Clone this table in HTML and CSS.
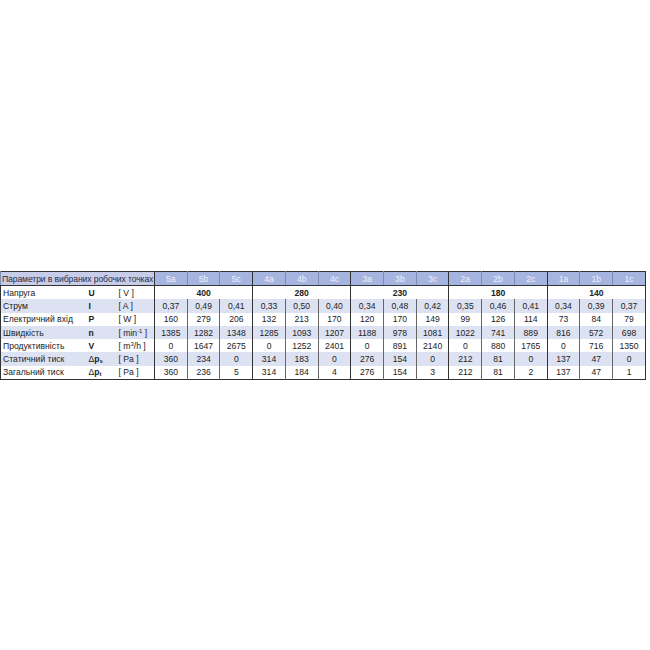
FILE: index.html
```html
<!DOCTYPE html>
<html>
<head>
<meta charset="utf-8">
<link rel="stylesheet" href="styles.css">
</head>
<body>
<div class="page">
<table class="params">
<colgroup>
<col class="c-name"><col class="c-sym"><col class="c-unit">
<col span="15" class="c-data">
</colgroup>
<thead>
<tr>
<th colspan="3" class="title">Параметри в вибраних робочих точках</th>
<th class="gs">5a</th><th>5b</th><th>5c</th>
<th class="gs">4a</th><th>4b</th><th>4c</th>
<th class="gs">3a</th><th>3b</th><th>3c</th>
<th class="gs">2a</th><th>2b</th><th>2c</th>
<th class="gs">1a</th><th>1b</th><th>1c</th>
</tr>
</thead>
<tbody>
<tr>
<td class="name">Напруга</td><td class="sym">U</td><td class="unit">[ V ]</td>
<td colspan="3" class="gs volt">400</td>
<td colspan="3" class="gs volt">280</td>
<td colspan="3" class="gs volt">230</td>
<td colspan="3" class="gs volt">180</td>
<td colspan="3" class="gs volt">140</td>
</tr>
<tr class="shade">
<td class="name">Струм</td><td class="sym">I</td><td class="unit">[ A ]</td>
<td class="gs">0,37</td><td>0,49</td><td>0,41</td>
<td class="gs">0,33</td><td>0,50</td><td>0,40</td>
<td class="gs">0,34</td><td>0,48</td><td>0,42</td>
<td class="gs">0,35</td><td>0,46</td><td>0,41</td>
<td class="gs">0,34</td><td>0,39</td><td>0,37</td>
</tr>
<tr>
<td class="name">Електричний вхід</td><td class="sym">P</td><td class="unit">[ W ]</td>
<td class="gs">160</td><td>279</td><td>206</td>
<td class="gs">132</td><td>213</td><td>170</td>
<td class="gs">120</td><td>170</td><td>149</td>
<td class="gs">99</td><td>126</td><td>114</td>
<td class="gs">73</td><td>84</td><td>79</td>
</tr>
<tr class="shade">
<td class="name">Швидкість</td><td class="sym">n</td><td class="unit">[ min<sup>-1</sup> ]</td>
<td class="gs">1385</td><td>1282</td><td>1348</td>
<td class="gs">1285</td><td>1093</td><td>1207</td>
<td class="gs">1188</td><td>978</td><td>1081</td>
<td class="gs">1022</td><td>741</td><td>889</td>
<td class="gs">816</td><td>572</td><td>698</td>
</tr>
<tr>
<td class="name">Продуктивність</td><td class="sym">V</td><td class="unit">[ m<sup>3</sup>/h ]</td>
<td class="gs">0</td><td>1647</td><td>2675</td>
<td class="gs">0</td><td>1252</td><td>2401</td>
<td class="gs">0</td><td>891</td><td>2140</td>
<td class="gs">0</td><td>880</td><td>1765</td>
<td class="gs">0</td><td>716</td><td>1350</td>
</tr>
<tr class="shade">
<td class="name">Статичний тиск</td><td class="sym"><span class="delta">Δ</span>p<sub>s</sub></td><td class="unit">[ Pa ]</td>
<td class="gs">360</td><td>234</td><td>0</td>
<td class="gs">314</td><td>183</td><td>0</td>
<td class="gs">276</td><td>154</td><td>0</td>
<td class="gs">212</td><td>81</td><td>0</td>
<td class="gs">137</td><td>47</td><td>0</td>
</tr>
<tr>
<td class="name">Загальний тиск</td><td class="sym"><span class="delta">Δ</span>p<sub>t</sub></td><td class="unit">[ Pa ]</td>
<td class="gs">360</td><td>236</td><td>5</td>
<td class="gs">314</td><td>184</td><td>4</td>
<td class="gs">276</td><td>154</td><td>3</td>
<td class="gs">212</td><td>81</td><td>2</td>
<td class="gs">137</td><td>47</td><td>1</td>
</tr>
</tbody>
</table>
</div>
</body>
</html>
```

FILE: styles.css
```css
html, body {
  margin: 0;
  padding: 0;
  background: #ffffff;
}
.page {
  width: 650px;
  height: 650px;
  padding-top: 271px;
  box-sizing: border-box;
}
.params {
  width: 646px;
  border-collapse: collapse;
  table-layout: fixed;
  font-family: "Liberation Sans", Arial, sans-serif;
  font-size: 8.6px;
  color: #222;
  border: 1.5px solid #333;
}
.c-name { width: 82px; }
.c-sym { width: 28px; }
.c-unit { width: 44px; }
.params th {
  height: 13px;
  padding: 0;
  background: #a6b5df;
  color: #eef1fb;
  font-weight: normal;
  border-left: 1px solid #7f8cb4;
  border-bottom: 1.5px solid #333;
  text-align: center;
}
.params th.title {
  background: #c7cce8;
  color: #2c2c44;
  text-align: left;
  padding-left: 1px;
  white-space: nowrap;
  overflow: hidden;
  letter-spacing: -0.1px;
}
.params td {
  height: 13.3px;
  padding: 0;
  text-align: center;
  border-left: 1px solid #666;
  white-space: nowrap;
  line-height: 12px;
}
.params td.name {
  text-align: left;
  padding-left: 2px;
  border-left: none;
}
.params td.sym {
  border-left: none;
  font-weight: bold;
  text-align: left;
  padding-left: 6px;
}
.params td.unit {
  border-left: none;
  text-align: left;
  padding-left: 8px;
}
.params .gs {
  border-left: 1.5px solid #333;
}
.params th.gs {
  border-left: 1.5px solid #333;
}
.params td.volt {
  font-weight: bold;
}
.params tr.shade td {
  background: #dde2f3;
}
.params sup {
  font-size: 6px;
  vertical-align: 3px;
  line-height: 0;
}
.params sub {
  font-size: 6px;
  vertical-align: -1px;
  line-height: 0;
}
.delta {
  font-weight: normal;
}
```
